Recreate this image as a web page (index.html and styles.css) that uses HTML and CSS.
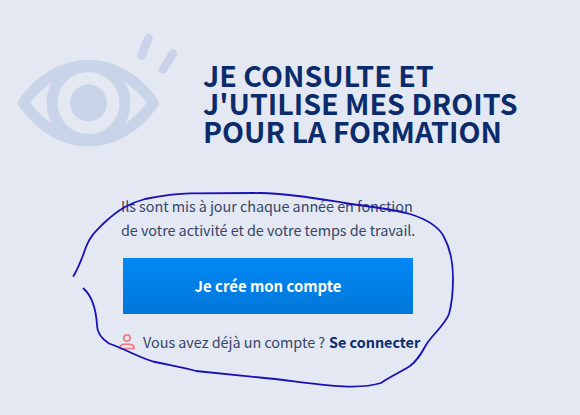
FILE: index.html
```
<!DOCTYPE html>
<html lang="fr">

<head>
    <meta charset="UTF-8">
    <title>Mes droits formation</title>
    <link rel="stylesheet" href="styles.css">
</head>

<body>
    <main class="rights-panel">
        <header class="rights-header">
            <svg class="eye-icon" width="164" height="114" viewBox="0 0 164 114" fill="none">
                <path class="eye-shape" d="M8.500 70C44 19.500 103 19.500 138.500 70C103 120.500 44 120.500 8.500 70Z" />
                <circle class="eye-ring" cx="73.500" cy="70" r="36.500" />
                <circle class="eye-pupil" cx="73.500" cy="70" r="18.500" />
                <path class="eye-lash" d="M133.500 5L126.500 22.500M158 20.500L148 36.500" />
            </svg>
            <h1 class="rights-title">
                <span>Je consulte et</span>
                <span>j'utilise mes droits</span>
                <span>pour la formation</span>
            </h1>
        </header>

        <section class="account">
            <p class="account-text">Ils sont mis à jour chaque année en fonction<br>de votre activité et de votre temps de travail.</p>
            <button type="button" class="account-button">Je crée mon compte</button>
            <div class="account-login">
                <svg class="user-icon" width="16" height="16" viewBox="0 0 16 16" fill="none">
                    <circle cx="8" cy="4" r="3.200" />
                    <path d="M1 14.700V13.500C1 11.500 3 10.200 8 10.200S15 11.500 15 13.500V14.700Z" />
                </svg>
                <span class="login-question">Vous avez déjà un compte ?</span>
                <a class="login-link" href="#">Se connecter</a>
            </div>
        </section>
    </main>

    <!-- Hand-drawn circle around the account block -->
    <svg class="pen-mark" width="580" height="415" viewBox="0 0 580 415" fill="none">
        <path d="M73.500 276C80 265 82 258 86 247C90 236 96 231 104 223C119 209 130 203 145 199C160 196 175 193.500 190 193.300L260 193C295 194 320 199 345 203C370 207 392 209 410 214C426 219 439 227 444 237C451 250 453 262 453 278C453 295 451 307 449 314C445 325 431 336 426 345C421 354 417 361 410 366C399 373 391 376 381 383C371 386 357 387 343 386.300C316 385 289 380 260 377.500C235 375 215 373 196 371C183 367 168 365 153 361.500C138 357 125 349 109 343.500C102 339 97 334 97 325C96 309 92 296 83.500 288.500" />
    </svg>
</body>

</html>
```

FILE: styles.css
```
:root {
    --background-color: #e4e8f3;
    --title-color: #0b2b6b;
    --text-color: #354568;
    --eye-color: #c9d4e8;
    --pen-color: #1a10b4;
}

body {
    margin: 0;
    min-height: 415px;
    overflow: hidden;
    background-color: var(--background-color);
    color: var(--text-color);
    font-family: "Noto Sans CJK SC", "Noto Sans", sans-serif;
}

.rights-panel {
    padding: 33px 0 0 15px;
}

.rights-header {
    display: flex;
    gap: 24px;
}

.eye-icon {
    flex: none;
}

.eye-shape {
    stroke: var(--eye-color);
    stroke-width: 11;
    stroke-linejoin: round;
}

.eye-ring {
    stroke: var(--eye-color);
    stroke-width: 11;
}

.eye-pupil {
    fill: var(--eye-color);
}

.eye-lash {
    stroke: #cbd2e9;
    stroke-width: 8.500;
    stroke-linecap: round;
}

.rights-title {
    margin: 28px 0 0;
    color: var(--title-color);
    font-size: 28.600px;
    line-height: 28px;
    text-transform: uppercase;
}

.rights-title span {
    display: block;
    white-space: nowrap;
}

.account {
    width: 320px;
    margin: 47px 0 0 103px;
}

.account-text {
    margin: 0 0 16px 3px;
    font-size: 14.400px;
    line-height: 24px;
    letter-spacing: -0.050px;
    white-space: nowrap;
}

.account-button {
    display: block;
    width: 290px;
    height: 56px;
    margin-left: 5px;
    padding: 0 0 2px;
    border: none;
    background: linear-gradient(#0288f5, #0077d9);
    color: white;
    font-family: inherit;
    font-size: 14.900px;
    font-weight: bold;
    cursor: pointer;
}

.account-login {
    display: flex;
    align-items: center;
    margin-top: 16px;
    font-size: 14.400px;
    line-height: 24px;
    letter-spacing: -0.030px;
    white-space: nowrap;
}

.user-icon {
    flex: none;
    margin: 0 8px 0 1px;
    stroke: #ee7f8b;
    stroke-width: 1.800;
}

.login-question {
    margin-right: 4px;
}

.login-link {
    color: var(--title-color);
    font-weight: bold;
    text-decoration: none;
}

.pen-mark {
    position: absolute;
    top: 0;
    left: 0;
    pointer-events: none;
    stroke: var(--pen-color);
    stroke-width: 1.800;
    stroke-linecap: round;
}
```
